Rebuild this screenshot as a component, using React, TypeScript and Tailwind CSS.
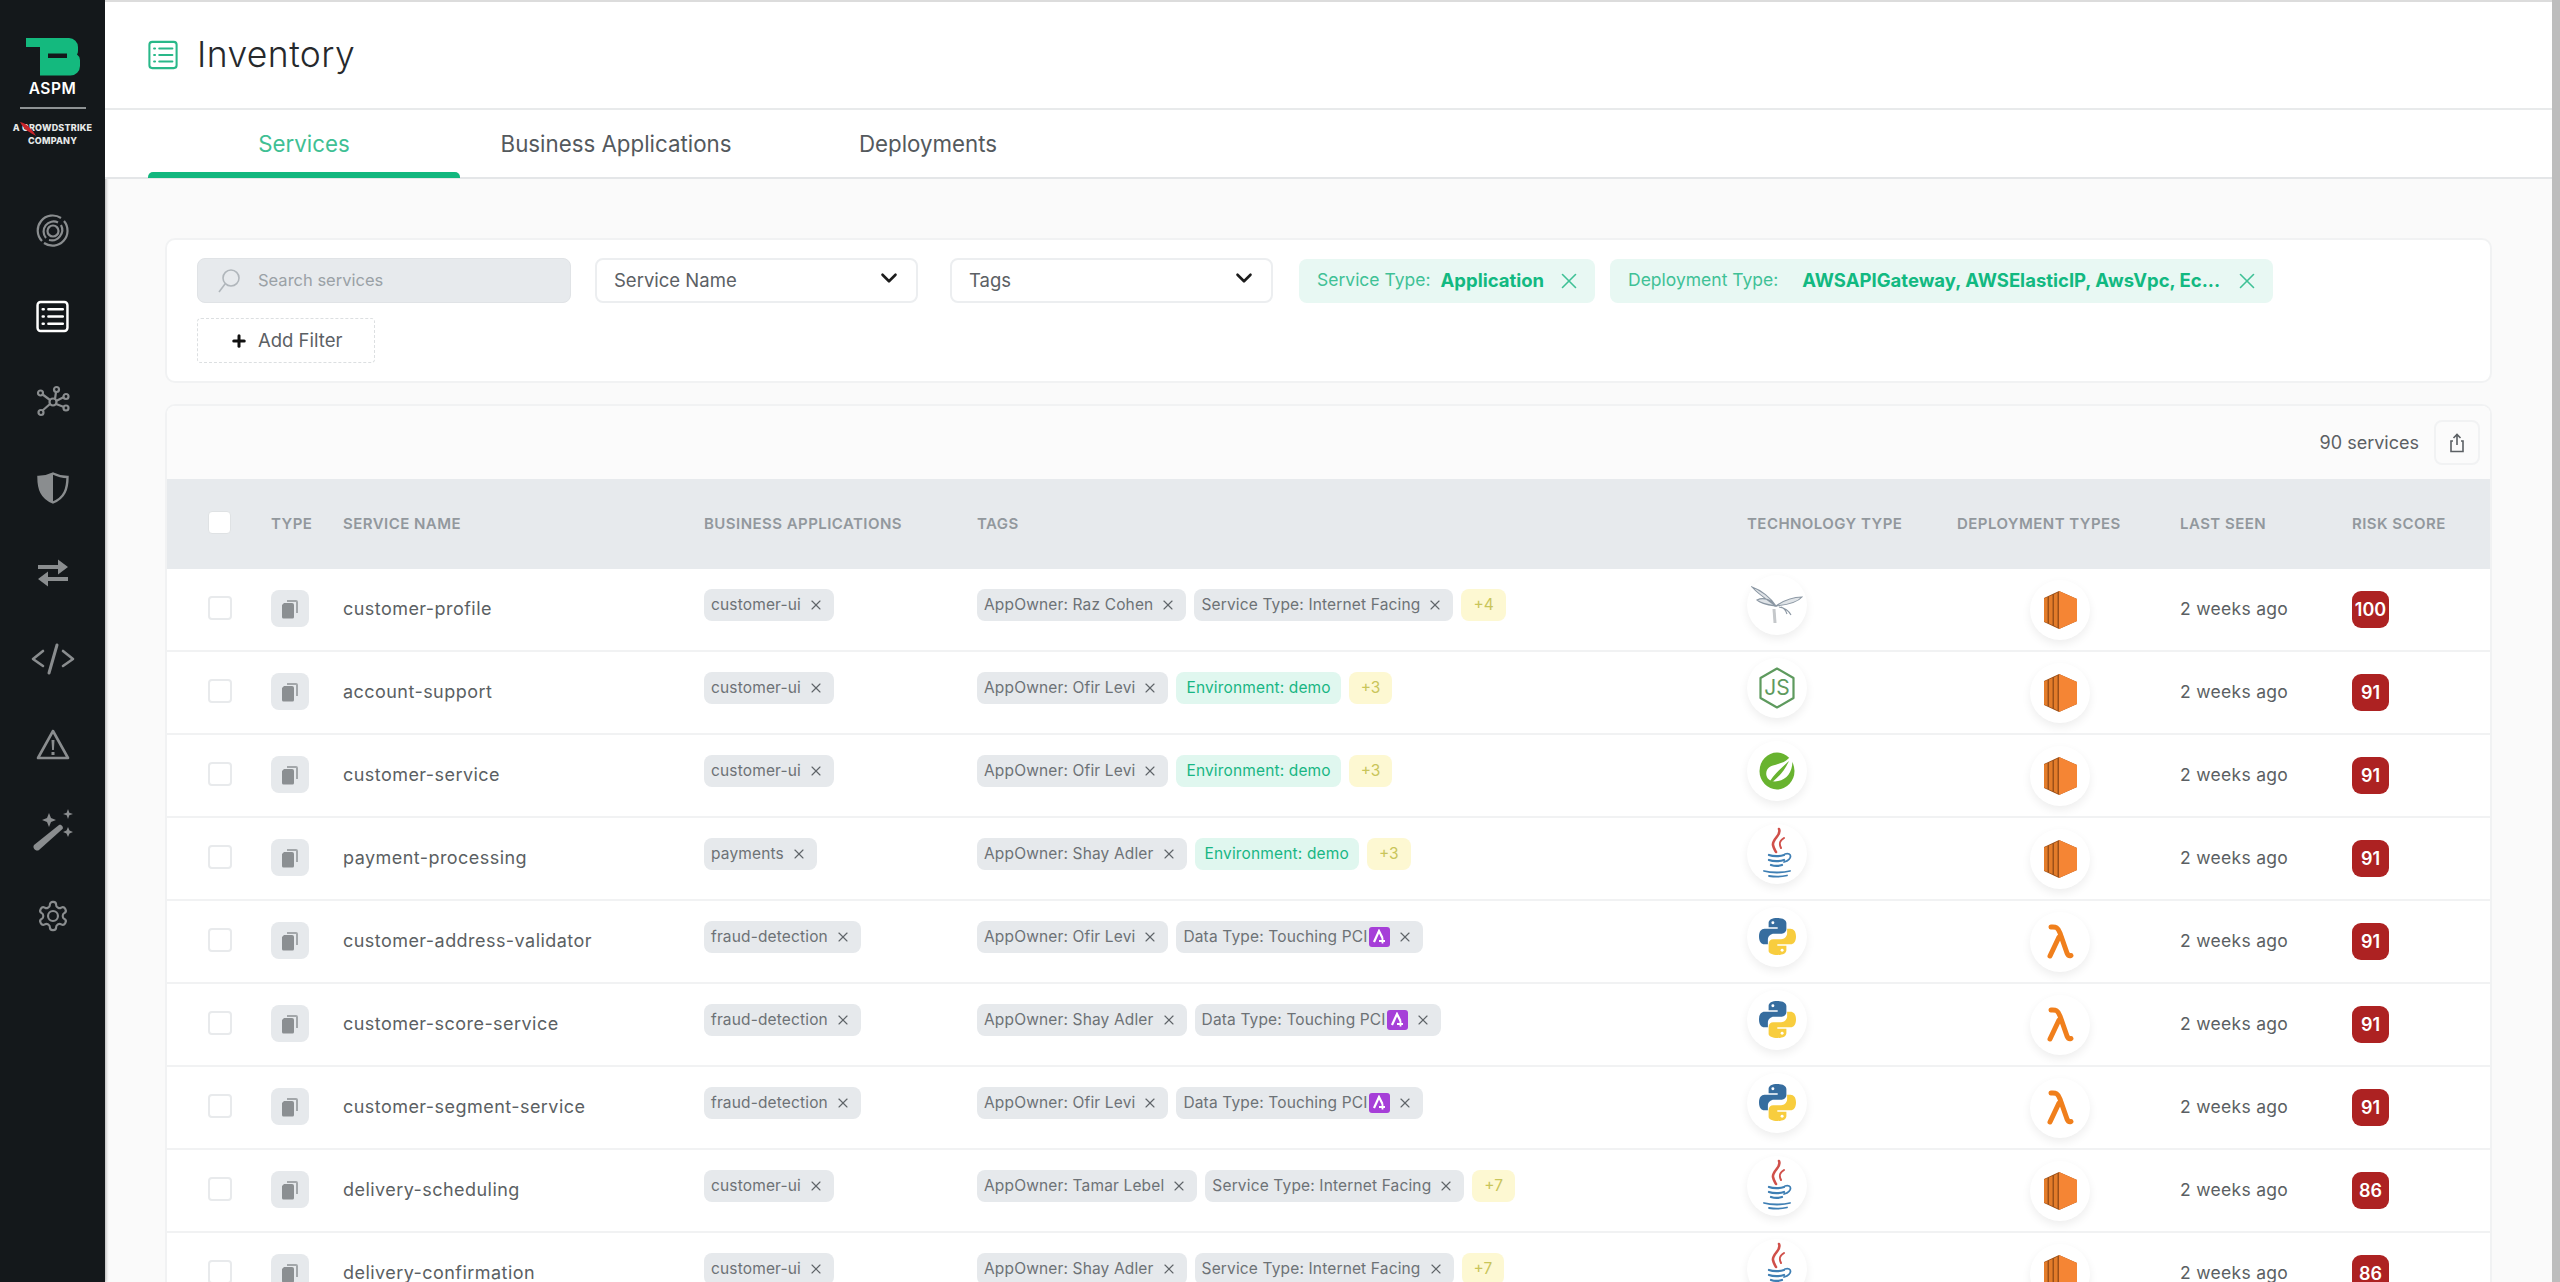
import React from "react";
import { ChevronDown, X, Plus } from "lucide-react";

type Tag = { t: string; kind?: "env" | "pci" };
type Row = {
  name: string;
  app: string;
  tags: Tag[];
  more?: string;
  tech: "wasp" | "node" | "spring" | "java" | "python";
  deploy: "ec2" | "lambda";
  score: number;
};

const IT: Tag = { t: "Service Type: Internet Facing" };
const ENV: Tag = { t: "Environment: demo", kind: "env" };
const PCI: Tag = { t: "Data Type: Touching PCI", kind: "pci" };

const rows: Row[] = [
  { name: "customer-profile", app: "customer-ui", tags: [{ t: "AppOwner: Raz Cohen" }, IT], more: "+4", tech: "wasp", deploy: "ec2", score: 100 },
  { name: "account-support", app: "customer-ui", tags: [{ t: "AppOwner: Ofir Levi" }, ENV], more: "+3", tech: "node", deploy: "ec2", score: 91 },
  { name: "customer-service", app: "customer-ui", tags: [{ t: "AppOwner: Ofir Levi" }, ENV], more: "+3", tech: "spring", deploy: "ec2", score: 91 },
  { name: "payment-processing", app: "payments", tags: [{ t: "AppOwner: Shay Adler" }, ENV], more: "+3", tech: "java", deploy: "ec2", score: 91 },
  { name: "customer-address-validator", app: "fraud-detection", tags: [{ t: "AppOwner: Ofir Levi" }, PCI], tech: "python", deploy: "lambda", score: 91 },
  { name: "customer-score-service", app: "fraud-detection", tags: [{ t: "AppOwner: Shay Adler" }, PCI], tech: "python", deploy: "lambda", score: 91 },
  { name: "customer-segment-service", app: "fraud-detection", tags: [{ t: "AppOwner: Ofir Levi" }, PCI], tech: "python", deploy: "lambda", score: 91 },
  { name: "delivery-scheduling", app: "customer-ui", tags: [{ t: "AppOwner: Tamar Lebel" }, IT], more: "+7", tech: "java", deploy: "ec2", score: 86 },
  { name: "delivery-confirmation", app: "customer-ui", tags: [{ t: "AppOwner: Shay Adler" }, IT], more: "+7", tech: "java", deploy: "ec2", score: 86 },
];

function ListIcon({ color, size, sw }: { color: string; size: number; sw: number }) {
  return (
    <svg width={size} height={size} viewBox="0 0 32 32" fill="none" stroke={color} strokeWidth={sw} strokeLinecap="round">
      <rect x="1.5" y="2" width="29" height="28" rx="3" />
      <path d="M12 9h14M12 16h14M12 23h14" />
      <path d="M6.5 9h1M6.5 16h1M6.5 23h1" />
    </svg>
  );
}

function SideIcons() {
  const g = "#8a8d8f";
  const items = [
    <svg key="0" width="34" height="34" viewBox="0 0 34 34" fill="none" stroke={g} strokeWidth="2.2">
      <path d="M6 27A15 15 0 0 1 25 4" />
      <path d="M28 7a15 15 0 0 1-20 22" />
      <path d="M10 24A10 10 0 0 1 22 8.5" />
      <path d="M25 11a10.500 10.500 0 0 1-12 15" />
      <circle cx="17" cy="17" r="5.500" />
    </svg>,
    <ListIcon key="1" color="#ffffff" size={33} sw={2.4} />,
    <svg key="2" width="34" height="34" viewBox="0 0 34 34" fill="none" stroke={g} strokeWidth="2.200">
      <circle cx="17" cy="17" r="3.500" />
      <path d="M14 15L6 9M19 14L20 7M20 16L28 12M20 19L28 22M14 19L6 26" />
      <circle cx="4.500" cy="8" r="2.500" />
      <circle cx="20.500" cy="4.500" r="2.500" />
      <circle cx="30" cy="11.500" r="2.500" />
      <circle cx="30" cy="23" r="2.500" />
      <circle cx="5" cy="27.500" r="2.500" />
    </svg>,
    <svg key="3" width="32" height="32" viewBox="0 0 32 32">
      <path d="M16 1.500C11 4 6 5 1.500 5c0 12 3 21 14.500 25.500C27.500 26 30.500 17 30.500 5 26 5 21 4 16 1.500z" fill="none" stroke={g} strokeWidth="2.400" />
      <path d="M16 1.500C11 4 6 5 1.500 5c0 12 3 21 14.500 25.500z" fill={g} />
    </svg>,
    <svg key="4" width="32" height="28" viewBox="0 0 32 28" fill={g}>
      <path d="M1 7h20V1.500L31 9l-10 7.500V11H1z" transform="translate(0,-1)" />
      <path d="M31 17H11v-5.500L1 19l10 7.500V21h20z" transform="translate(0,1)" />
    </svg>,
    <svg key="5" width="44" height="32" viewBox="0 0 44 32" fill="none" stroke={g} strokeWidth="2.600" strokeLinecap="round" strokeLinejoin="round">
      <path d="M12 8L2 16l10 7" />
      <path d="M32 8l10 8-10 7" />
      <path d="M26 2L18 30" strokeWidth="3" />
    </svg>,
    <svg key="6" width="34" height="32" viewBox="0 0 34 32">
      <path d="M17 3L2 30h30z" fill="none" stroke={g} strokeWidth="2.600" strokeLinejoin="round" />
      <path d="M15.500 12h3l-.6 10h-1.800zM15.500 24h3v3h-3z" fill={g} />
    </svg>,
    <svg key="7" width="44" height="44" viewBox="0 0 44 44" fill={g}>
      <path d="M3 37L28 17c2-1.500 5 2 3.500 4L8 42c-3 2-7-2-5-5z" />
      <path d="M18 5l2 5 5 2-5 2-2 5-2-5-5-2 5-2zM37 1l1.300 3.700L42 6l-3.700 1.300L37 11l-1.300-3.700L32 6l3.700-1.300zM37 19l1.500 3.500L42 24l-3.500 1.500L37 29l-1.500-3.500L32 24l3.500-1.500z" />
    </svg>,
    <svg key="8" width="34" height="34" viewBox="0 0 24 24" fill="none" stroke={g} strokeWidth="1.500" strokeLinecap="round" strokeLinejoin="round">
      <path d="M12.220 2h-.44a2 2 0 0 0-2 2v.18a2 2 0 0 1-1 1.730l-.43.250a2 2 0 0 1-2 0l-.15-.080a2 2 0 0 0-2.730.730l-.22.380a2 2 0 0 0 .730 2.730l.15.100a2 2 0 0 1 1 1.720v.510a2 2 0 0 1-1 1.740l-.15.090a2 2 0 0 0-.730 2.730l.22.380a2 2 0 0 0 2.730.730l.15-.080a2 2 0 0 1 2 0l.43.250a2 2 0 0 1 1 1.730V20a2 2 0 0 0 2 2h.44a2 2 0 0 0 2-2v-.18a2 2 0 0 1 1-1.730l.43-.250a2 2 0 0 1 2 0l.15.080a2 2 0 0 0 2.730-.730l.22-.390a2 2 0 0 0-.730-2.730l-.15-.080a2 2 0 0 1-1-1.740v-.5a2 2 0 0 1 1-1.740l.15-.090a2 2 0 0 0 .730-2.730l-.22-.380a2 2 0 0 0-2.730-.730l-.15.080a2 2 0 0 1-2 0l-.43-.250a2 2 0 0 1-1-1.730V4a2 2 0 0 0-2-2z" />
      <circle cx="12" cy="12" r="3.500" />
    </svg>,
  ];
  return (
    <div className="mt-[41px] flex flex-col items-center">
      {items.map((it, i) => (
        <div key={i} className="flex h-[85.6px] w-full items-center justify-center">
          {it}
        </div>
      ))}
    </div>
  );
}

function Logo() {
  return (
    <div className="flex flex-col items-center pt-[38px]">
      <svg width="54" height="38" viewBox="0 0 54 38">
        <path
          fillRule="evenodd"
          fill="#14b97e"
          d="M0 0H43a9 9 0 0 1 9 9V13a6 6 0 0 1-1 3.500 7 7 0 0 1 3 5.500V28a9.500 9.500 0 0 1-9.500 9.500H14V9H0zM22 15.500V20H41V15.500z"
        />
      </svg>
      <div className="mt-[3px] text-[15.500px] font-semibold leading-[20px] tracking-[0.5px] text-white">ASPM</div>
      <div className="mt-[8px] h-[2px] w-[66px] bg-[#8e9294]" />
      <div className="relative mt-[12px] flex flex-col items-center text-[9px] font-extrabold leading-[13px] tracking-[0.2px] text-[#e6e8e8]">
        <div className="whitespace-nowrap">A CROWDSTRIKE</div>
        <div>COMPANY</div>
        <svg className="absolute left-[5px] top-[0px]" width="20" height="16" viewBox="0 0 20 16">
          <path d="M2 1c5 1 11 5 16 14C13 12 6 9 2 1z" fill="#c8242b" />
        </svg>
      </div>
    </div>
  );
}

function TypeBox() {
  return (
    <div className="flex h-[37px] w-[38px] items-center justify-center rounded-[8px] bg-[#e6e9ec]">
      <svg width="18" height="20" viewBox="0 0 18 20">
        <path d="M6 1h9a2 2 0 0 1 2 2v11h-2V3H6z" fill="#a3a7aa" />
        <path d="M3 4h8a2 2 0 0 1 2 2v12a1.500 1.500 0 0 1-1.500 1.500h-9A1.500 1.500 0 0 1 1 18V6z" fill="#8b8f92" />
      </svg>
    </div>
  );
}

function TechIcon({ k }: { k: Row["tech"] }) {
  if (k === "wasp")
    return (
      <svg width="52" height="40" viewBox="0 0 52 40" fill="none" stroke="#8b97a3" strokeWidth="1.100">
        <path d="M1 2C10 5 20 13 25 21C18 16 8 10 1 2zM6 15C12 12 20 14 25 21C18 20 10 19 6 15z" fill="#dfe3e7" />
        <path d="M51 12C42 12 32 16 25 21C34 20 46 18 51 12z" fill="#dfe3e7" />
        <path d="M28 22C34 23 38 26 40 30M30 22c3 1 5 4 6 7" />
        <path d="M23 24l1 14" stroke="#c5c8cb" strokeWidth="3" />
      </svg>
    );
  if (k === "node")
    return (
      <div className="relative flex h-[42px] w-[36px] items-center justify-center">
        <svg width="36" height="42" viewBox="0 0 36 42" fill="none" stroke="#5e9a5e" strokeWidth="2.200">
          <path d="M18 1.500L34.500 11V31L18 40.500 1.500 31V11z" strokeLinejoin="round" />
          <path d="M10 9V28c0 4-2 5-5 4" strokeWidth="0" />
        </svg>
        <span className="absolute inset-0 flex items-center justify-center text-[21px] font-normal leading-none text-[#5e9a5e]">JS</span>
      </div>
    );
  if (k === "spring")
    return (
      <svg width="36" height="38" viewBox="0 0 36 38">
        <ellipse cx="18" cy="19" rx="17.500" ry="18.500" fill="#68b32f" />
        <path d="M33 3c2 14-3 24-14 26C11 31 5 25 8 18c3-7 15-4 22-12z" fill="#fff" />
        <path d="M9 33C13 24 21 17 30 9 25 20 18 27 9 33z" fill="#68b32f" />
      </svg>
    );
  if (k === "java")
    return (
      <svg width="34" height="54" viewBox="0 0 34 54" fill="none" strokeLinecap="round">
        <path d="M19 2c3 6-7 10-6 16 .5 3 2 5 3 7" stroke="#d0504a" strokeWidth="2.600" />
        <path d="M24 11c-5 3-5 6-3 10" stroke="#d0504a" strokeWidth="2" />
        <path d="M9 28c4 1.500 11 1.500 15 0M9 33c4 1.500 11 1.500 15 0M11 38c3 1 8 1 11 0" stroke="#3f7fb4" strokeWidth="2.200" />
        <path d="M25 27c7-2 8 5-1 8" stroke="#3f7fb4" strokeWidth="1.800" />
        <path d="M4 44c7 2 19 2 26 0M9 49c6 1 12 1 18-.5" stroke="#3f7fb4" strokeWidth="1.800" />
      </svg>
    );
  return (
    <svg width="37" height="37" viewBox="2 2 20 20">
      <path d="M11.900 2C9 2 7.200 3 7.200 4.700V7h4.900v.8H5C3.200 7.800 2 9.300 2 12s1.200 4.200 3 4.200h1.800v-2.500c0-1.800 1.500-3.200 3.300-3.200h4.200c1.400 0 2.500-1.100 2.500-2.500V4.700C16.800 3 14.800 2 11.900 2z" fill="#366d9f" />
      <circle cx="9.500" cy="4.600" r=".8" fill="#fff" />
      <path d="M12.100 22c2.900 0 4.700-1 4.700-2.700V17h-4.900v-.8H19c1.800 0 3-1.500 3-4.200s-1.200-4.200-3-4.200h-1.800v2.500c0 1.800-1.500 3.200-3.300 3.200H9.700c-1.400 0-2.500 1.100-2.500 2.500v3.800C7.200 21 9.200 22 12.100 22z" fill="#f8cd3e" />
      <circle cx="14.500" cy="19.400" r=".8" fill="#fff" />
    </svg>
  );
}

function DeployIcon({ k }: { k: Row["deploy"] }) {
  if (k === "lambda")
    return (
      <svg width="28" height="36" viewBox="0 0 28 36" fill="none" stroke="#f07f1c" strokeWidth="5" strokeLinecap="round" strokeLinejoin="round">
        <path d="M5 3c5-.5 7 .5 9 6l7 20c1 2.500 2 3 4 2.500" />
        <path d="M13 13L4 32" />
      </svg>
    );
  return (
    <svg width="33" height="38" viewBox="0 0 33 38">
      <path d="M15 0L33 8V30L15 38 0 31V7z" fill="#9c5018" />
      <path d="M0 7.500L3.500 6V32L0 30.500z" fill="#e37c2a" />
      <path d="M5 5.500L8.500 4V34L5 32.500z" fill="#e37c2a" />
      <path d="M10 3.500L13.500 1.500V36.500L10 34.500z" fill="#e37c2a" />
      <path d="M15 0L33 8V30L15 38z" fill="#f58534" />
    </svg>
  );
}

function Circle({ children, className }: { children: React.ReactNode; className?: string }) {
  return (
    <div className={"flex h-[60px] w-[60px] items-center justify-center rounded-full bg-white shadow-[0_4px_10px_rgba(0,0,0,0.07)] " + (className ?? "")}>
      {children}
    </div>
  );
}

function Chip({ tag }: { tag: Tag }) {
  if (tag.kind === "env") {
    return (
      <div className="flex h-[32px] items-center whitespace-nowrap rounded-[8px] bg-[#e0f7ef] px-[10px] text-[15.500px] tracking-[0.15px] text-[#18b684]">
        {tag.t}
      </div>
    );
  }
  return (
    <div className="flex h-[32px] items-center whitespace-nowrap rounded-[8px] bg-[#e6e9ec] pl-[7px] pr-[10px] text-[15.500px] tracking-[0.15px] text-[#6d7276]">
      <span>{tag.t}</span>
      {tag.kind === "pci" && (
        <span className="ml-[1px] flex h-[20px] w-[21px] items-center justify-center rounded-[3px] bg-[#a63fd8]">
          <svg width="15" height="15" viewBox="0 0 15 15" fill="none" stroke="#fff" strokeWidth="2.200">
            <path d="M2 13L7 2l3.500 7" />
            <path d="M7 12h6M10.500 9v5.500" strokeWidth="1.800" />
          </svg>
        </span>
      )}
      <X size={16} color="#5f6468" strokeWidth={1.700} className="ml-[7px] shrink-0" />
    </div>
  );
}

function HeadCell({ w, children }: { w: string; children?: React.ReactNode }) {
  return <div className={w + " shrink-0 whitespace-nowrap text-[15px] font-semibold tracking-[0.45px] text-[#92989d]"}>{children}</div>;
}

function Select({ label }: { label: string }) {
  return (
    <div className="flex h-[45px] w-[323px] items-center justify-between rounded-[8px] border-2 border-[#eceef0] bg-white pl-[17px] pr-[14px] text-[18.500px] text-[#5b6064]">
      <span>{label}</span>
      <ChevronDown size={26} color="#1c1c1c" strokeWidth={2.400} className="mb-[6px]" />
    </div>
  );
}

function FilterChip({ label, value, className, gap }: { label: string; value: string; className: string; gap: string }) {
  return (
    <div className={"flex h-[44px] items-center whitespace-nowrap rounded-[8px] bg-[#e8f8f3] pl-[18px] pr-[13px] text-[17.500px] text-[#3fc196] " + className}>
      <span>{label}</span>
      <span className={gap + " text-[18.500px] font-bold text-[#12b981]"}>{value}</span>
      <X size={26} color="#3fc196" strokeWidth={1.500} className="ml-auto shrink-0" />
    </div>
  );
}

export default function App() {
  return (
    <div className="flex h-screen w-full overflow-hidden bg-[#fafafa] font-['Inter','Noto_Sans',sans-serif]">
      <aside className="h-full w-[105px] shrink-0 bg-[#14181b] shadow-[1px_0_3px_rgba(0,0,0,0.3)]">
        <Logo />
        <SideIcons />
      </aside>

      <main className="flex min-w-0 flex-1 flex-col">
        <header className="flex h-[110px] shrink-0 items-center border-y-2 border-[#e8eaeb] border-t-[#dcdcdc] bg-white pl-[43px]">
          <ListIcon color="#29b889" size={30} sw={2.200} />
          <h1 className="ml-[19px] text-[35.500px] font-light leading-none tracking-[0.4px] text-[#26292c]">Inventory</h1>
        </header>
        <nav className="flex h-[69px] shrink-0 border-b-2 border-[#e4e6e8] bg-white pl-[43px] text-[22.300px]">
          <div className="relative flex h-full w-[312px] items-center justify-center text-[#3fbf94]">
            Services
            <div className="absolute inset-x-0 bottom-[-1px] h-[6px] rounded-t-[5px] bg-[#12b77e]" />
          </div>
          <div className="flex h-full w-[312px] items-center justify-center text-[#54595d]">Business Applications</div>
          <div className="flex h-full w-[312px] items-center justify-center text-[#54595d]">Deployments</div>
        </nav>

        <div className="flex min-h-0 flex-1 flex-col px-[60px] pt-[59px]">
          <section className="h-[145px] shrink-0 rounded-[10px] border-2 border-[#f1f2f3] bg-white pl-[30px] pt-[18px]">
            <div className="flex items-center">
              <div className="flex h-[45px] w-[374px] items-center rounded-[8px] border border-[#e0e3e6] bg-[#e7eaed] pl-[19px] text-[16.500px] text-[#9aa1a6]">
                <svg width="24" height="26" viewBox="0 0 24 26" fill="none" stroke="#b0b6bb" strokeWidth="1.600">
                  <circle cx="14" cy="10" r="8" />
                  <path d="M8 16L2 24" />
                </svg>
                <span className="ml-[17px]">Search services</span>
              </div>
              <div className="ml-[24px]">
                <Select label="Service Name" />
              </div>
              <div className="ml-[32px]">
                <Select label="Tags" />
              </div>
              <FilterChip label="Service Type:" value="Application" gap="ml-[10px]" className="ml-[26px] w-[296px]" />
              <FilterChip label="Deployment Type:" value="AWSAPIGateway, AWSElasticIP, AwsVpc, Ec..." gap="ml-[24px]" className="ml-[15px] w-[663px]" />
            </div>
            <div className="mt-[15px] flex h-[45px] w-[178px] items-center rounded-[4px] border border-dashed border-[#dcdfe1] bg-white pl-[32px] text-[18.500px] text-[#5b6064]">
              <Plus size={18} color="#111" strokeWidth={4} />
              <span className="ml-[10px]">Add Filter</span>
            </div>
          </section>

          <section className="mt-[21px] min-h-0 flex-1 overflow-hidden rounded-t-[10px] border-x-2 border-t-2 border-[#f1f2f3] bg-white">
            <div className="flex h-[73px] items-center justify-end bg-[#fbfbfb] pr-[10px]">
              <span className="text-[18px] text-[#5b6064]">90 services</span>
              <div className="ml-[15px] flex h-[45px] w-[46px] items-center justify-center rounded-[8px] border-2 border-[#f1f2f3]">
                <svg width="16" height="20" viewBox="0 0 16 20" fill="none" stroke="#5b6064" strokeWidth="1.600">
                  <path d="M8 12V1.500M4.500 5L8 1.500 11.500 5" />
                  <path d="M4 8H2v10.500h12V8h-2" />
                </svg>
              </div>
            </div>

            <div className="flex h-[90px] items-center bg-[#e7eaed] pl-[41px]">
              <div className="w-[63px] shrink-0">
                <div className="mb-[4px] h-[23px] w-[23px] rounded-[4px] border border-[#dfe2e4] bg-white" />
              </div>
              <HeadCell w="w-[72px]">TYPE</HeadCell>
              <HeadCell w="w-[361px]">SERVICE NAME</HeadCell>
              <HeadCell w="w-[273px]">BUSINESS APPLICATIONS</HeadCell>
              <HeadCell w="w-[770px]">TAGS</HeadCell>
              <HeadCell w="w-[210px]">TECHNOLOGY TYPE</HeadCell>
              <HeadCell w="w-[223px]">DEPLOYMENT TYPES</HeadCell>
              <HeadCell w="w-[172px]">LAST SEEN</HeadCell>
              <HeadCell w="w-[130px]">RISK SCORE</HeadCell>
            </div>

            {rows.map((r) => (
              <div key={r.name} className="flex h-[83px] items-center border-b-2 border-[#f1f2f3] pl-[41px]">
                <div className="mb-[3px] w-[63px] shrink-0">
                  <div className="h-[24px] w-[24px] rounded-[4px] border-2 border-[#e8eaec] bg-white" />
                </div>
                <div className="mb-[2px] w-[72px] shrink-0">
                  <TypeBox />
                </div>
                <div className="mb-[2px] w-[361px] shrink-0 text-[18px] tracking-[0.45px] text-[#5b5f63]">{r.name}</div>
                <div className="mb-[10px] flex w-[273px] shrink-0">
                  <Chip tag={{ t: r.app }} />
                </div>
                <div className="mb-[10px] flex w-[770px] shrink-0 items-center gap-[8px]">
                  {r.tags.map((t) => (
                    <Chip key={t.t} tag={t} />
                  ))}
                  {r.more && (
                    <div className="flex h-[32px] items-center rounded-[8px] bg-[#fdf8d2] px-[12px] text-[15.500px] text-[#c9c55a]">{r.more}</div>
                  )}
                </div>
                <div className="mb-[10px] w-[210px] shrink-0">
                  <Circle>
                    <TechIcon k={r.tech} />
                  </Circle>
                </div>
                <div className="flex w-[223px] shrink-0 pl-[73px]">
                  <Circle>
                    <DeployIcon k={r.deploy} />
                  </Circle>
                </div>
                <div className="w-[172px] shrink-0 text-[17.500px] tracking-[0.3px] text-[#5b5f63]">2 weeks ago</div>
                <div className="flex h-[37px] w-[37px] shrink-0 items-center justify-center rounded-[9px] bg-[#ad2222] text-[18px] font-semibold text-white">
                  {r.score}
                </div>
              </div>
            ))}
          </section>
        </div>
      </main>

      <div className="h-full w-[8px] shrink-0 bg-[#bdbdbd]" />
    </div>
  );
}
